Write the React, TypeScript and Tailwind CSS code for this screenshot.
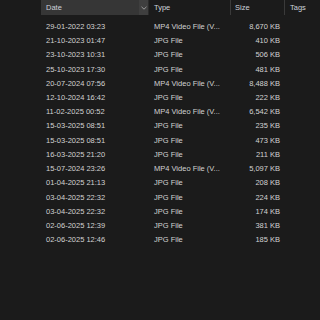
const rows = [
  ["29-01-2022 03:23", "MP4 Video File (V...", "8,670 KB"],
  ["21-10-2023 01:47", "JPG File", "410 KB"],
  ["23-10-2023 10:31", "JPG File", "506 KB"],
  ["25-10-2023 17:30", "JPG File", "481 KB"],
  ["20-07-2024 07:56", "MP4 Video File (V...", "8,488 KB"],
  ["12-10-2024 16:42", "JPG File", "222 KB"],
  ["11-02-2025 00:52", "MP4 Video File (V...", "6,542 KB"],
  ["15-03-2025 08:51", "JPG File", "235 KB"],
  ["15-03-2025 08:51", "JPG File", "473 KB"],
  ["16-03-2025 21:20", "JPG File", "211 KB"],
  ["15-07-2024 23:26", "MP4 Video File (V...", "5,097 KB"],
  ["01-04-2025 21:13", "JPG File", "208 KB"],
  ["03-04-2025 22:32", "JPG File", "224 KB"],
  ["03-04-2025 22:32", "JPG File", "174 KB"],
  ["02-06-2025 12:39", "JPG File", "381 KB"],
  ["02-06-2025 12:46", "JPG File", "185 KB"],
];

export default function App() {
  return (
    <div
      className="w-[320px] h-[320px] overflow-hidden bg-[#1b1b1b] text-[#d2d2d2] text-[7.5px] leading-none"
      style={{ fontFamily: '"Liberation Sans", Arial, sans-serif' }}
    >
      {/* column headers */}
      <div className="flex h-[15px] pl-[41px]">
        <div className="flex w-[107px] bg-[#363636]">
          <div className="flex flex-1 items-center pl-[5px] text-[#cdd2da]">Date</div>
          <div className="flex w-[9px] items-center justify-center bg-[#3f3f3f] text-[#aaaaaa]">
            <svg width="6" height="4" viewBox="0 0 6 4">
              <path d="M0.5 0.8 L3 3.2 L5.5 0.8" stroke="#b0b0b0" strokeWidth="0.8" fill="none" />
            </svg>
          </div>
        </div>
        <div className="w-px bg-[#2a2a2a]" />
        <div className="flex w-[81px] items-center pl-[5px] text-[#cdd2da]">Type</div>
        <div className="w-px bg-[#3a3a3a]" />
        <div className="flex w-[53px] items-center pl-[4px] text-[#cdd2da]">Size</div>
        <div className="w-px bg-[#3a3a3a]" />
        <div className="flex flex-1 items-center pl-[5px] text-[#cdd2da]">Tags</div>
      </div>

      {/* file rows */}
      <div className="flex flex-col pt-[4.6px] pl-[41px]">
        {rows.map(([date, type, size], i) => (
          <div key={i} className="flex h-[14.22px] items-center">
            <div className="w-[108px] pl-[5px] whitespace-nowrap">{date}</div>
            <div className="w-[82px] pl-[5px] whitespace-nowrap">{type}</div>
            <div className="w-[53px] pr-[4px] text-right whitespace-nowrap">{size}</div>
          </div>
        ))}
      </div>
    </div>
  );
}
